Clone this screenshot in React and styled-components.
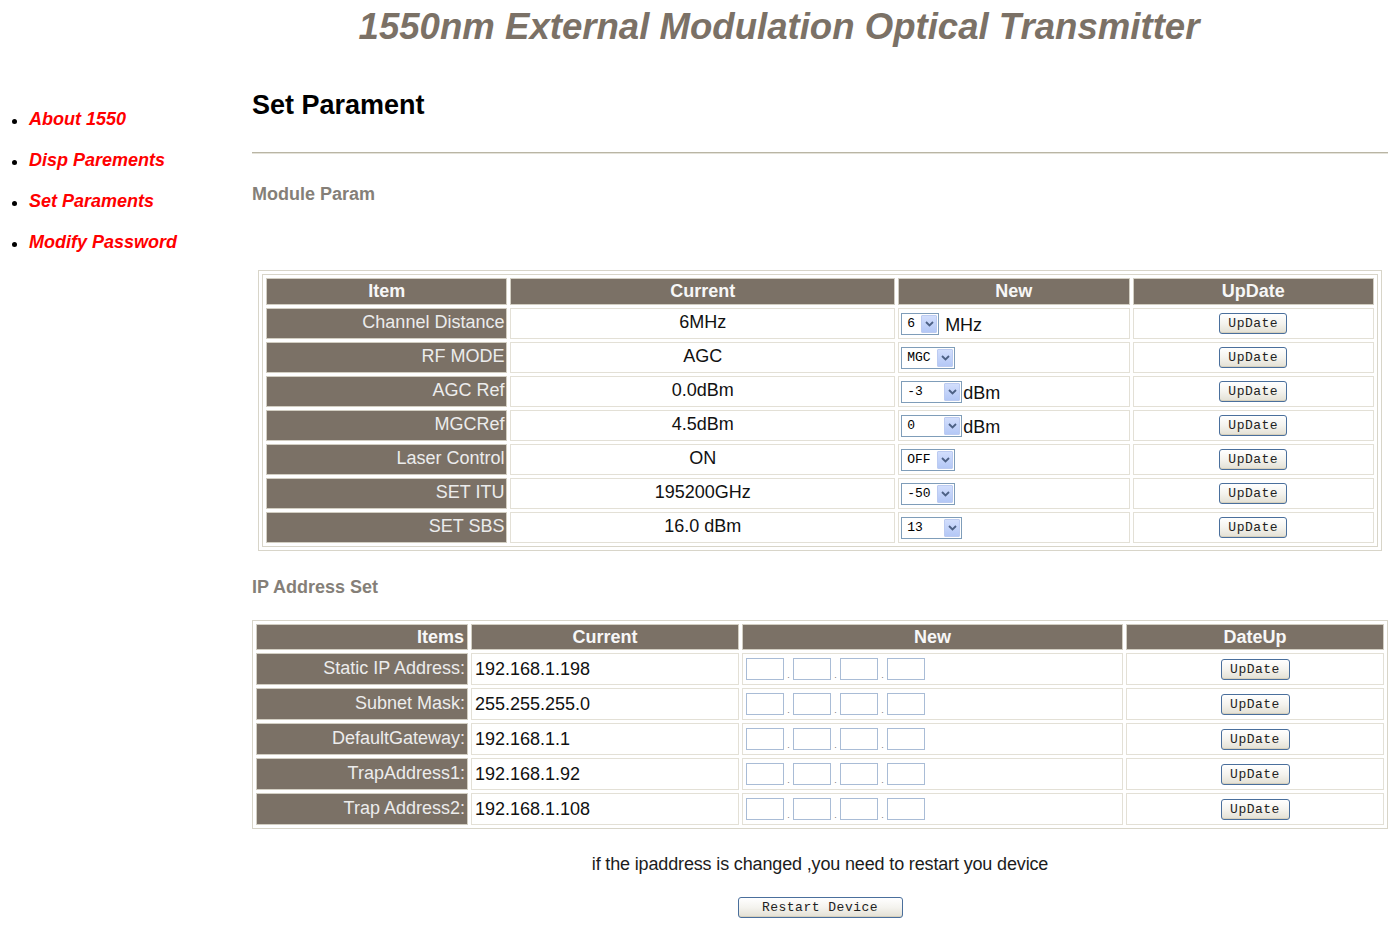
import React from "react";
import styled, { createGlobalStyle } from "styled-components";

const GlobalStyle = createGlobalStyle`
  *, *::before, *::after { box-sizing: border-box; }
  html, body { margin: 0; padding: 0; background: #ffffff; }
  body {
    font-family: "Liberation Sans", Arial, sans-serif;
    font-size: 18px;
    color: #000;
  }
`;

const BROWN = "#7b7166";

const Page = styled.div`
  width: 1398px;
  min-height: 936px;
  padding-right: 10px;
`;

const Title = styled.h1`
  margin: 5px 0 0 170px;
  font-size: 36.6px;
  line-height: 44px;
  font-weight: bold;
  font-style: italic;
  color: ${BROWN};
  text-align: center;
`;

const Body = styled.div`
  display: grid;
  grid-template-columns: 252px 1fr;
`;

const Nav = styled.ul`
  list-style: none;
  margin: 50px 0 0 0;
  padding: 0;
`;

const NavItem = styled.li`
  display: flex;
  align-items: center;
  height: 41px;
  &::before {
    content: "";
    width: 5px;
    height: 5px;
    border-radius: 50%;
    background: #000;
    margin: 4px 12px 0 12px;
  }
`;

const NavLink = styled.a`
  color: #ff0000;
  font-weight: bold;
  font-style: italic;
  font-size: 18px;
  text-decoration: none;
`;

const Main = styled.main`
  display: flex;
  flex-direction: column;
`;

const PageHeading = styled.h2`
  margin: 40px 0 0 0;
  font-size: 27px;
  line-height: 32px;
  font-weight: bold;
  color: #000;
`;

const Rule = styled.div`
  margin-top: 31px;
  height: 2px;
  border-top: 1px solid #b9b5a4;
  border-bottom: 1px solid #e4e2d9;
`;

const SectionTitle = styled.h3`
  margin: ${(p) => p.$top}px 0 0 0;
  font-size: 18px;
  line-height: 22px;
  font-weight: bold;
  color: #857f78;
`;

const Frame = styled.div`
  margin: ${(p) => p.$top}px 0 0 ${(p) => p.$left}px;
  width: ${(p) => p.$width}px;
  border: 1px solid #d8d5c9;
  padding: ${(p) => p.$pad}px;
`;

const Grid = styled.table`
  width: 100%;
  table-layout: fixed;
  border-collapse: separate;
  border-spacing: 3px;
  border: ${(p) => (p.$bordered ? "1px solid #d8d5c9" : "none")};
`;

const HeadCell = styled.th`
  height: ${(p) => p.$h}px;
  padding: 0 3px;
  background: ${BROWN};
  border: 1px solid #d2cec2;
  color: #f7f7f7;
  font-size: 18px;
  font-weight: bold;
  text-align: ${(p) => p.$align || "center"};
  width: ${(p) => p.$w}px;
`;

const LabelCell = styled.td`
  height: ${(p) => p.$h}px;
  padding: 0 2px 2px 0;
  background: ${BROWN};
  border: 1px solid #d2cec2;
  color: #ececec;
  font-size: 18px;
  text-align: right;
  white-space: nowrap;
`;

const ValueCell = styled.td`
  height: ${(p) => p.$h}px;
  padding: ${(p) => (p.$align === "left" ? "0 0 0 3px" : "0 0 2px 0")};
  background: #fff;
  border: 1px solid #e3e0d6;
  color: #111;
  font-size: 18px;
  text-align: ${(p) => p.$align || "center"};
  white-space: nowrap;
`;

const ControlCell = styled.td`
  height: ${(p) => p.$h}px;
  padding: 0 0 0 2px;
  background: #fff;
  border: 1px solid #e3e0d6;
`;

const ActionCell = styled.td`
  height: ${(p) => p.$h}px;
  padding: 0;
  background: #fff;
  border: 1px solid #e3e0d6;
  text-align: center;
`;

const Inline = styled.div`
  display: flex;
  align-items: center;
  font-size: 18px;
  color: #111;
`;

const Unit = styled.span`
  margin-left: ${(p) => p.$gap}px;
  margin-top: 3px;
`;

const SelectBox = styled.div`
  display: flex;
  align-items: stretch;
  width: ${(p) => p.$w}px;
  height: 22px;
  border: 1px solid #7f9db9;
  background: #fff;
  padding: 1px;
`;

const SelectText = styled.span`
  flex: 1;
  padding-left: 4px;
  font-family: "Liberation Mono", "DejaVu Sans Mono", monospace;
  font-size: 13px;
  line-height: 18px;
  color: #000;
  white-space: pre;
`;

const SelectArrow = styled.span`
  width: 16px;
  display: flex;
  align-items: center;
  justify-content: center;
  background: linear-gradient(#d2defc, #b4c8f6);
  border: 1px solid #bccbf1;
  border-radius: 1px;
`;

const XPButton = styled.button`
  width: ${(p) => p.$w}px;
  height: 21px;
  padding: 0;
  border: 1px solid #4a6f9c;
  border-radius: 3px;
  background: linear-gradient(#ffffff 0%, #f4f3ee 50%, #e3e0d4 100%);
  box-shadow: inset 0 -1px 0 #d6d0bd;
  font-family: "Liberation Mono", "DejaVu Sans Mono", monospace;
  font-size: 13px;
  font-weight: 400;
  letter-spacing: 0.5px;
  color: #222;
  cursor: pointer;
  vertical-align: middle;
`;

const IpGroup = styled.div`
  display: flex;
  align-items: flex-end;
  padding-left: 1px;
`;

const Octet = styled.input`
  width: 38px;
  height: 22px;
  border: 1px solid #a9bcd6;
  background: #fff;
  padding: 0 2px;
  font-size: 13px;
`;

const Dot = styled.span`
  width: 9px;
  text-align: center;
  font-size: 9px;
  line-height: 10px;
  color: #777;
`;

const Note = styled.p`
  margin: 24px 0 0 0;
  font-size: 18px;
  line-height: 22px;
  letter-spacing: -0.15px;
  color: #1c1c1c;
  text-align: center;
`;

const Centered = styled.div`
  display: flex;
  justify-content: center;
  margin-top: 22px;
`;

const Chevron = () => (
  <svg width="9" height="6" viewBox="0 0 9 6">
    <path d="M1 1 L4.5 4.5 L8 1" fill="none" stroke="#4d6185" strokeWidth="1.8" />
  </svg>
);

const Select = ({ value, width }) => (
  <SelectBox $w={width}>
    <SelectText>{value}</SelectText>
    <SelectArrow>
      <Chevron />
    </SelectArrow>
  </SelectBox>
);

const moduleRows = [
  { item: "Channel Distance", current: "6MHz", value: "6", width: 38, unit: "MHz", gap: 6 },
  { item: "RF MODE", current: "AGC", value: "MGC", width: 54 },
  { item: "AGC Ref", current: "0.0dBm", value: "-3", width: 61, unit: "dBm", gap: 1 },
  { item: "MGCRef", current: "4.5dBm", value: "0", width: 61, unit: "dBm", gap: 1 },
  { item: "Laser Control", current: "ON", value: "OFF", width: 54 },
  { item: "SET ITU", current: "195200GHz", value: "-50", width: 54 },
  { item: "SET SBS", current: "16.0 dBm", value: "13", width: 61 },
];

const ipRows = [
  { item: "Static IP Address:", current: "192.168.1.198" },
  { item: "Subnet Mask:", current: "255.255.255.0" },
  { item: "DefaultGateway:", current: "192.168.1.1" },
  { item: "TrapAddress1:", current: "192.168.1.92" },
  { item: "Trap Address2:", current: "192.168.1.108" },
];

const menu = ["About 1550", "Disp Parements", "Set Paraments", "Modify Password"];

const IpInputs = () => (
  <IpGroup>
    <Octet />
    <Dot>.</Dot>
    <Octet />
    <Dot>.</Dot>
    <Octet />
    <Dot>.</Dot>
    <Octet />
  </IpGroup>
);

export default function App() {
  return (
    <Page>
      <GlobalStyle />
      <Title>1550nm External Modulation Optical Transmitter</Title>
      <Body>
        <Nav>
          {menu.map((m) => (
            <NavItem key={m}>
              <NavLink href="#">{m}</NavLink>
            </NavItem>
          ))}
        </Nav>
        <Main>
          <PageHeading>Set Parament</PageHeading>
          <Rule />
          <SectionTitle $top={29}>Module Param</SectionTitle>

          <Frame $top={65} $left={6} $width={1124} $pad={3}>
            <Grid $bordered>
              <thead>
                <tr>
                  <HeadCell $h={27} $w={241}>Item</HeadCell>
                  <HeadCell $h={27} $w={384}>Current</HeadCell>
                  <HeadCell $h={27} $w={231}>New</HeadCell>
                  <HeadCell $h={27} $w={241}>UpDate</HeadCell>
                </tr>
              </thead>
              <tbody>
                {moduleRows.map((r) => (
                  <tr key={r.item}>
                    <LabelCell $h={31}>{r.item}</LabelCell>
                    <ValueCell $h={31}>{r.current}</ValueCell>
                    <ControlCell $h={31}>
                      <Inline>
                        <Select value={r.value} width={r.width} />
                        {r.unit && <Unit $gap={r.gap}>{r.unit}</Unit>}
                      </Inline>
                    </ControlCell>
                    <ActionCell $h={31}>
                      <XPButton $w={68}>UpDate</XPButton>
                    </ActionCell>
                  </tr>
                ))}
              </tbody>
            </Grid>
          </Frame>

          <SectionTitle $top={25}>IP Address Set</SectionTitle>

          <Frame $top={22} $left={0} $width={1136} $pad={0}>
            <Grid>
              <thead>
                <tr>
                  <HeadCell $h={26} $w={212} $align="right">Items</HeadCell>
                  <HeadCell $h={26} $w={268}>Current</HeadCell>
                  <HeadCell $h={26} $w={381}>New</HeadCell>
                  <HeadCell $h={26} $w={258}>DateUp</HeadCell>
                </tr>
              </thead>
              <tbody>
                {ipRows.map((r) => (
                  <tr key={r.item}>
                    <LabelCell $h={32}>{r.item}</LabelCell>
                    <ValueCell $h={32} $align="left">{r.current}</ValueCell>
                    <ControlCell $h={32}>
                      <IpInputs />
                    </ControlCell>
                    <ActionCell $h={32}>
                      <XPButton $w={69}>UpDate</XPButton>
                    </ActionCell>
                  </tr>
                ))}
              </tbody>
            </Grid>
          </Frame>

          <Note>if the ipaddress is changed ,you need to restart you device</Note>
          <Centered>
            <XPButton $w={165}>Restart Device</XPButton>
          </Centered>
        </Main>
      </Body>
    </Page>
  );
}
